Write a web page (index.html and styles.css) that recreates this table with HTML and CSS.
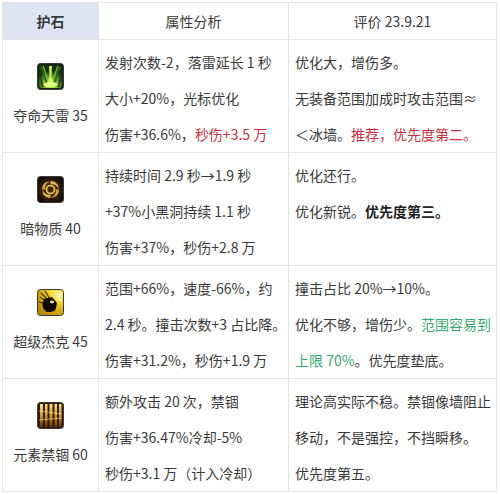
FILE: index.html
```html
<!DOCTYPE html>
<html lang="zh-CN">
<head>
<meta charset="utf-8">
<title>护石</title>
<link rel="stylesheet" href="styles.css">
</head>
<body>
<table class="grid">
  <colgroup>
    <col class="c1"><col class="c2"><col class="c3">
  </colgroup>
  <thead>
    <tr>
      <th class="h-first">护石</th>
      <th class="h-plain">属性分析</th>
      <th class="h-plain">评价 23.9.21</th>
    </tr>
  </thead>
  <tbody>
    <tr>
      <td class="name">
        <div class="stone">
          <svg class="icon" viewBox="0 0 27 27" width="27" height="27">
            <defs>
              <radialGradient id="g1" cx="0.5" cy="0.85" r="0.6">
                <stop offset="0" stop-color="#eaff8a"/>
                <stop offset="0.35" stop-color="#9fdc3a"/>
                <stop offset="1" stop-color="#17300f"/>
              </radialGradient>
            </defs>
            <rect x="0.5" y="0.5" width="26" height="26" rx="3" fill="#12240d" stroke="#3a3a3a"/>
            <rect x="2" y="2" width="23" height="23" rx="2" fill="url(#g1)"/>
            <path d="M4 4 C8 9 6 14 10 20" stroke="#2f6a1d" stroke-width="2" fill="none"/>
            <path d="M23 4 C19 9 21 14 17 20" stroke="#2f6a1d" stroke-width="2" fill="none"/>
            <path d="M6 3 C9 8 8 12 11 17" stroke="#6fc02e" stroke-width="1.2" fill="none"/>
            <path d="M21 3 C18 8 19 12 16 17" stroke="#6fc02e" stroke-width="1.2" fill="none"/>
            <path d="M12 3 L15 3 L14.5 14 L17 21 L10 21 L12.5 14 Z" fill="#c9f25a"/>
            <ellipse cx="13.5" cy="21.5" rx="7" ry="2.5" fill="#e6ff8c"/>
            <path d="M3 14 C5 16 4 20 6 24" stroke="#1d4512" stroke-width="1.5" fill="none"/>
            <path d="M24 14 C22 16 23 20 21 24" stroke="#1d4512" stroke-width="1.5" fill="none"/>
          </svg>
          <span>夺命天雷 35</span>
        </div>
      </td>
      <td class="txt">
        <span class="ln">发射次数-2，落雷延长 1 秒</span>
        <span class="ln">大小+20%，光标优化</span>
        <span class="ln">伤害+36.6%，<span class="red">秒伤+3.5 万</span></span>
      </td>
      <td class="txt">
        <span class="ln">优化大，增伤多。</span>
        <span class="ln">无装备范围加成时攻击范围≈</span>
        <span class="ln">＜冰墙。<span class="red">推荐，优先度第二。</span></span>
      </td>
    </tr>
    <tr>
      <td class="name">
        <div class="stone">
          <svg class="icon" viewBox="0 0 27 27" width="27" height="27">
            <defs>
              <radialGradient id="g2" cx="0.5" cy="0.5" r="0.55">
                <stop offset="0" stop-color="#5a3a10"/>
                <stop offset="1" stop-color="#140d05"/>
              </radialGradient>
            </defs>
            <rect x="0.5" y="0.5" width="26" height="26" rx="3" fill="url(#g2)" stroke="#3a3a3a"/>
            <path d="M13.5 5 C19 5 22 9 21.5 13 C20 9 16 7.5 13.5 8.5 Z" fill="#e6b24a"/>
            <path d="M22 13.5 C22 19 18 22 14 21.5 C18 20 19.5 16 18.5 13.5 Z" fill="#d9a23c"/>
            <path d="M13.5 22 C8 22 5 18 5.5 14 C7 18 11 19.5 13.5 18.5 Z" fill="#e6b24a"/>
            <path d="M5 13.5 C5 8 9 5 13 5.5 C9 7 7.5 11 8.5 13.5 Z" fill="#d9a23c"/>
            <circle cx="13.5" cy="13.5" r="4" fill="none" stroke="#f2c860" stroke-width="1.6"/>
            <circle cx="13.5" cy="13.5" r="1.6" fill="#3a2508"/>
          </svg>
          <span>暗物质 40</span>
        </div>
      </td>
      <td class="txt">
        <span class="ln">持续时间 2.9 秒→1.9 秒</span>
        <span class="ln">+37%小黑洞持续 1.1 秒</span>
        <span class="ln">伤害+37%，秒伤+2.8 万</span>
      </td>
      <td class="txt">
        <span class="ln">优化还行。</span>
        <span class="ln">优化新锐。<b>优先度第三。</b></span>
      </td>
    </tr>
    <tr>
      <td class="name">
        <div class="stone">
          <svg class="icon" viewBox="0 0 27 27" width="27" height="27">
            <defs>
              <radialGradient id="g3" cx="0.8" cy="0.2" r="0.9">
                <stop offset="0" stop-color="#fff6a0"/>
                <stop offset="0.4" stop-color="#f2d21c"/>
                <stop offset="1" stop-color="#b88a0a"/>
              </radialGradient>
            </defs>
            <rect x="0.5" y="0.5" width="26" height="26" rx="3" fill="url(#g3)" stroke="#3a3a3a"/>
            <path d="M3 8 L10 13 M4 4 L11 11 M8 2 L13 10 M2 13 L9 15" stroke="#5a3a05" stroke-width="1.4"/>
            <path d="M6 10 L15 8 L20 14 L18 22 L9 23 Z" fill="#2a1a02"/>
            <circle cx="12.5" cy="16" r="7" fill="#0d0800"/>
            <ellipse cx="15" cy="13" rx="2.2" ry="1.4" fill="#fff3a0" opacity="0.9"/>
            <path d="M20 3 L21 8 M24 6 L21 9 M25 11 L21 11" stroke="#fffbe0" stroke-width="1.2"/>
          </svg>
          <span>超级杰克 45</span>
        </div>
      </td>
      <td class="txt">
        <span class="ln">范围+66%，速度-66%，约</span>
        <span class="ln">2.4 秒。撞击次数+3 占比降。</span>
        <span class="ln">伤害+31.2%，秒伤+1.9 万</span>
      </td>
      <td class="txt">
        <span class="ln">撞击占比 20%→10%。</span>
        <span class="ln">优化不够，增伤少。<span class="green">范围容易到</span></span>
        <span class="ln"><span class="green">上限 70%</span>。优先度垫底。</span>
      </td>
    </tr>
    <tr>
      <td class="name">
        <div class="stone">
          <svg class="icon" viewBox="0 0 27 27" width="27" height="27">
            <defs>
              <linearGradient id="g4" x1="0" y1="0" x2="0" y2="1">
                <stop offset="0" stop-color="#ffe080"/>
                <stop offset="0.5" stop-color="#d39a22"/>
                <stop offset="1" stop-color="#5a3308"/>
              </linearGradient>
            </defs>
            <rect x="0.5" y="0.5" width="26" height="26" rx="3" fill="#2e1a05" stroke="#3a3a3a"/>
            <rect x="3" y="2" width="3" height="23" fill="url(#g4)"/>
            <rect x="8" y="2" width="2.5" height="23" fill="url(#g4)"/>
            <rect x="12.5" y="2" width="3" height="23" fill="url(#g4)"/>
            <rect x="17.5" y="2" width="2.5" height="23" fill="url(#g4)"/>
            <rect x="22" y="2" width="2.5" height="23" fill="url(#g4)"/>
            <path d="M2 9 L25 12 M2 18 L25 16" stroke="#fff2b0" stroke-width="0.8" opacity="0.7"/>
          </svg>
          <span>元素禁锢 60</span>
        </div>
      </td>
      <td class="txt">
        <span class="ln">额外攻击 20 次，禁锢</span>
        <span class="ln">伤害+36.47%冷却-5%</span>
        <span class="ln">秒伤+3.1 万（计入冷却）</span>
      </td>
      <td class="txt">
        <span class="ln">理论高实际不稳。禁锢像墙阻止</span>
        <span class="ln">移动，不是强控，不挡瞬移。</span>
        <span class="ln">优先度第五。</span>
      </td>
    </tr>
  </tbody>
</table>
</body>
</html>
```
FILE: styles.css
```css
html, body {
  margin: 0;
  padding: 0;
  background: #ffffff;
}

body {
  padding: 2px 0 0 2px;
  font-family: "Noto Sans CJK SC", "Noto Sans", sans-serif;
  font-size: 14px;
  color: #3a3a3a;
}

.grid {
  border-collapse: collapse;
  width: 494px;
  table-layout: fixed;
}

.c1 { width: 96px; }
.c2 { width: 190px; }
.c3 { width: 208px; }

.grid th,
.grid td {
  border: 1px solid #e4e4e4;
}

.grid th {
  height: 36px;
  padding: 0;
  font-weight: normal;
  text-align: center;
  vertical-align: middle;
  line-height: 20px;
}

.grid th.h-first {
  background: #dee5f2;
  font-weight: bold;
}

.name {
  text-align: center;
  vertical-align: middle;
  padding: 0;
}

.stone {
  display: flex;
  flex-direction: column;
  align-items: center;
  gap: 15px;
  padding-bottom: 4px;
  line-height: 20px;
}

.icon {
  display: block;
}

.txt {
  vertical-align: top;
  padding: 4px 0 0 6px;
  white-space: nowrap;
  overflow: hidden;
}

.ln {
  display: block;
  height: 36px;
  line-height: 36px;
  overflow: hidden;
}

.red {
  color: #cc2f3f;
}

.green {
  color: #3aa872;
}

b {
  font-weight: bold;
  color: #222222;
}
```
